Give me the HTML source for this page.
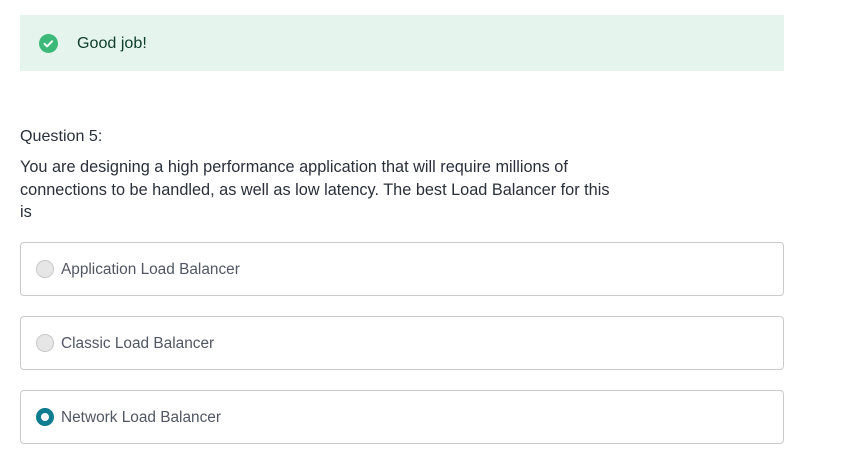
<!DOCTYPE html>
<html><head><style>
body{margin:0;width:847px;height:472px;background:#fff;font-family:"Liberation Sans",sans-serif;position:relative;overflow:hidden}
.banner{position:absolute;left:20px;top:15px;width:764px;height:56px;background:#e5f4ec}
.banner .ic{position:absolute;left:19px;top:19px;width:19px;height:19px;border-radius:50%;background:#3cb878}
.banner span{position:absolute;left:57px;top:19px;font-size:16.1px;color:#0f3d2c}
.q{position:absolute;left:20px;top:127px;font-size:16.1px;color:#29303b}
.p{position:absolute;left:20px;top:156px;width:600px;font-size:16.3px;line-height:22.5px;color:#29303b}
.opt{position:absolute;left:20px;width:762px;height:52px;border:1px solid #cacbcc;border-radius:4px}
.opt .r{position:absolute;left:15px;top:17px;border-radius:50%;background:#e6e6e6;border:1px solid #c8c8c8;box-sizing:border-box;width:18px;height:18px}
.opt .sel{background:#fff;border:5px solid #0f7c90}
.opt span{position:absolute;left:40px;top:18px;font-size:15.4px;color:#505763}
</style></head><body>
<div class="banner"><div class="ic"><svg width="19" height="19" viewBox="0 0 19 19"><path d="M5.5 9.8l2.6 2.5 5-5" fill="none" stroke="#fff" stroke-width="2" stroke-linecap="round" stroke-linejoin="round"/></svg></div><span>Good job!</span></div>
<div class="q">Question 5:</div>
<div class="p">You are designing a high performance application that will require millions of connections to be handled, as well as low latency. The best Load Balancer for this is</div>
<div class="opt" style="top:242px"><div class="r"></div><span>Application Load Balancer</span></div>
<div class="opt" style="top:316px"><div class="r"></div><span>Classic Load Balancer</span></div>
<div class="opt" style="top:390px"><div class="r sel"></div><span>Network Load Balancer</span></div>
</body></html>
